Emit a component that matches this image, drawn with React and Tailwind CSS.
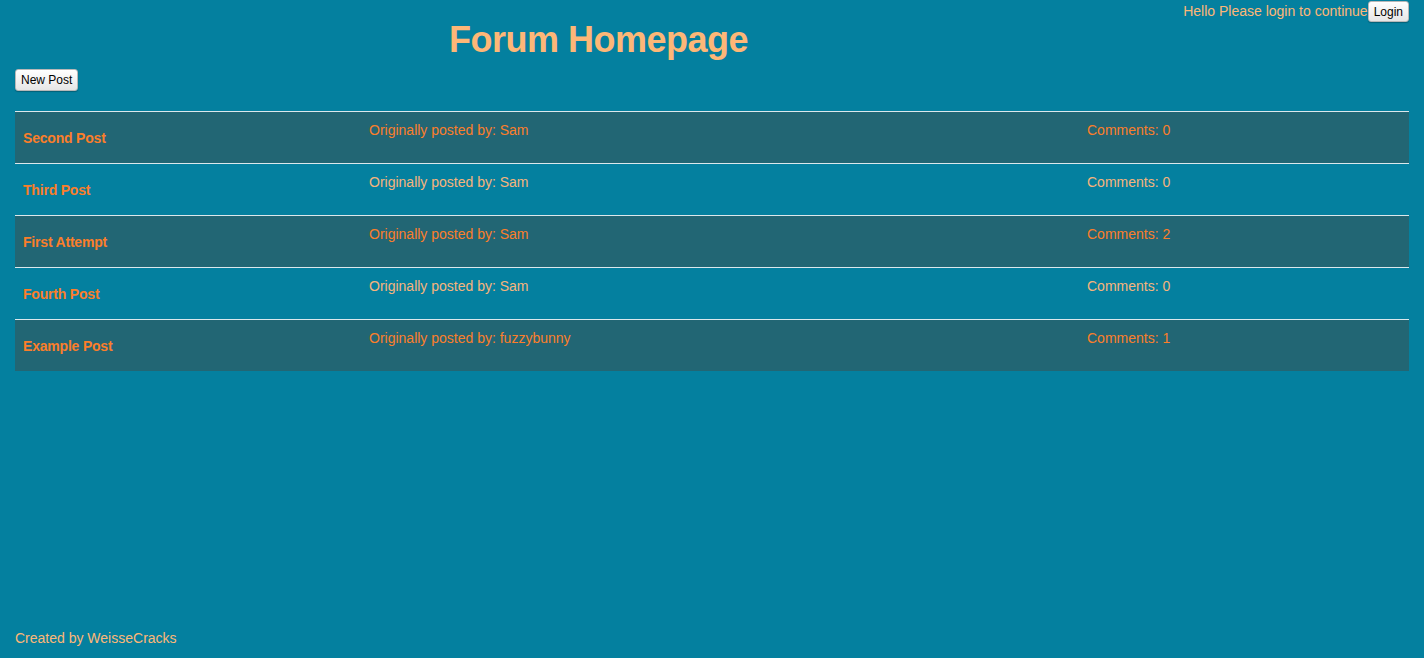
const posts = [
  { title: 'Second Post', author: 'Sam', comments: 0 },
  { title: 'Third Post', author: 'Sam', comments: 0 },
  { title: 'First Attempt', author: 'Sam', comments: 2 },
  { title: 'Fourth Post', author: 'Sam', comments: 0 },
  { title: 'Example Post', author: 'fuzzybunny', comments: 1 },
];

const btn =
  'rounded-[3px] border border-[#b8b8b8] bg-gradient-to-b from-white to-[#e6e6e6] text-black text-[12px] leading-none shadow-[0_1px_1px_rgba(0,0,0,0.25)]';

export default function App() {
  return (
    <div className="h-[658px] w-full bg-[#04809f] flex flex-col font-['Liberation_Sans',Arial,sans-serif] text-[14px] overflow-hidden">
      {/* Header */}
      <div className="relative h-[66px]">
        <div className="absolute right-[15px] top-[1px] flex items-center">
          <span className="text-[#fdb777]">Hello Please login to continue</span>
          <button className={`${btn} h-[21px] px-[5px]`}>Login</button>
        </div>
        <h1 className="pl-[449px] pt-[19px] text-[36px] font-bold leading-[42px] text-[#fdb777] tracking-[-0.5px]">
          Forum Homepage
        </h1>
      </div>

      <div className="px-[15px] pt-[3px]">
        <button className={`${btn} h-[22px] px-[5px]`}>New Post</button>
      </div>

      {/* Posts */}
      <div className="mx-[15px] mt-[20px]">
        {posts.map((p, i) => {
          const dark = i % 2 === 0;
          const sub = dark ? 'text-[#fb7e2a]' : 'text-[#f6b47c]';
          return (
            <div
              key={p.title}
              className={`flex h-[52px] border-t border-[#dbe8ec] ${dark ? 'bg-[#226674]' : ''}`}
            >
              <div className="w-[346px] pl-[8px] flex items-center pt-[1px] font-bold text-[#fb7e2a] tracking-[-0.2px]">
                {p.title}
              </div>
              <div className={`w-[718px] pl-[8px] pt-[8px] ${sub}`}>
                Originally posted by: {p.author}
              </div>
              <div className={`flex-1 pl-[8px] pt-[8px] ${sub}`}>
                Comments: {p.comments}
              </div>
            </div>
          );
        })}
      </div>

      <div className="mt-auto px-[15px] pb-[9px] text-[#fdb777]">
        Created by WeisseCracks
      </div>
    </div>
  );
}
